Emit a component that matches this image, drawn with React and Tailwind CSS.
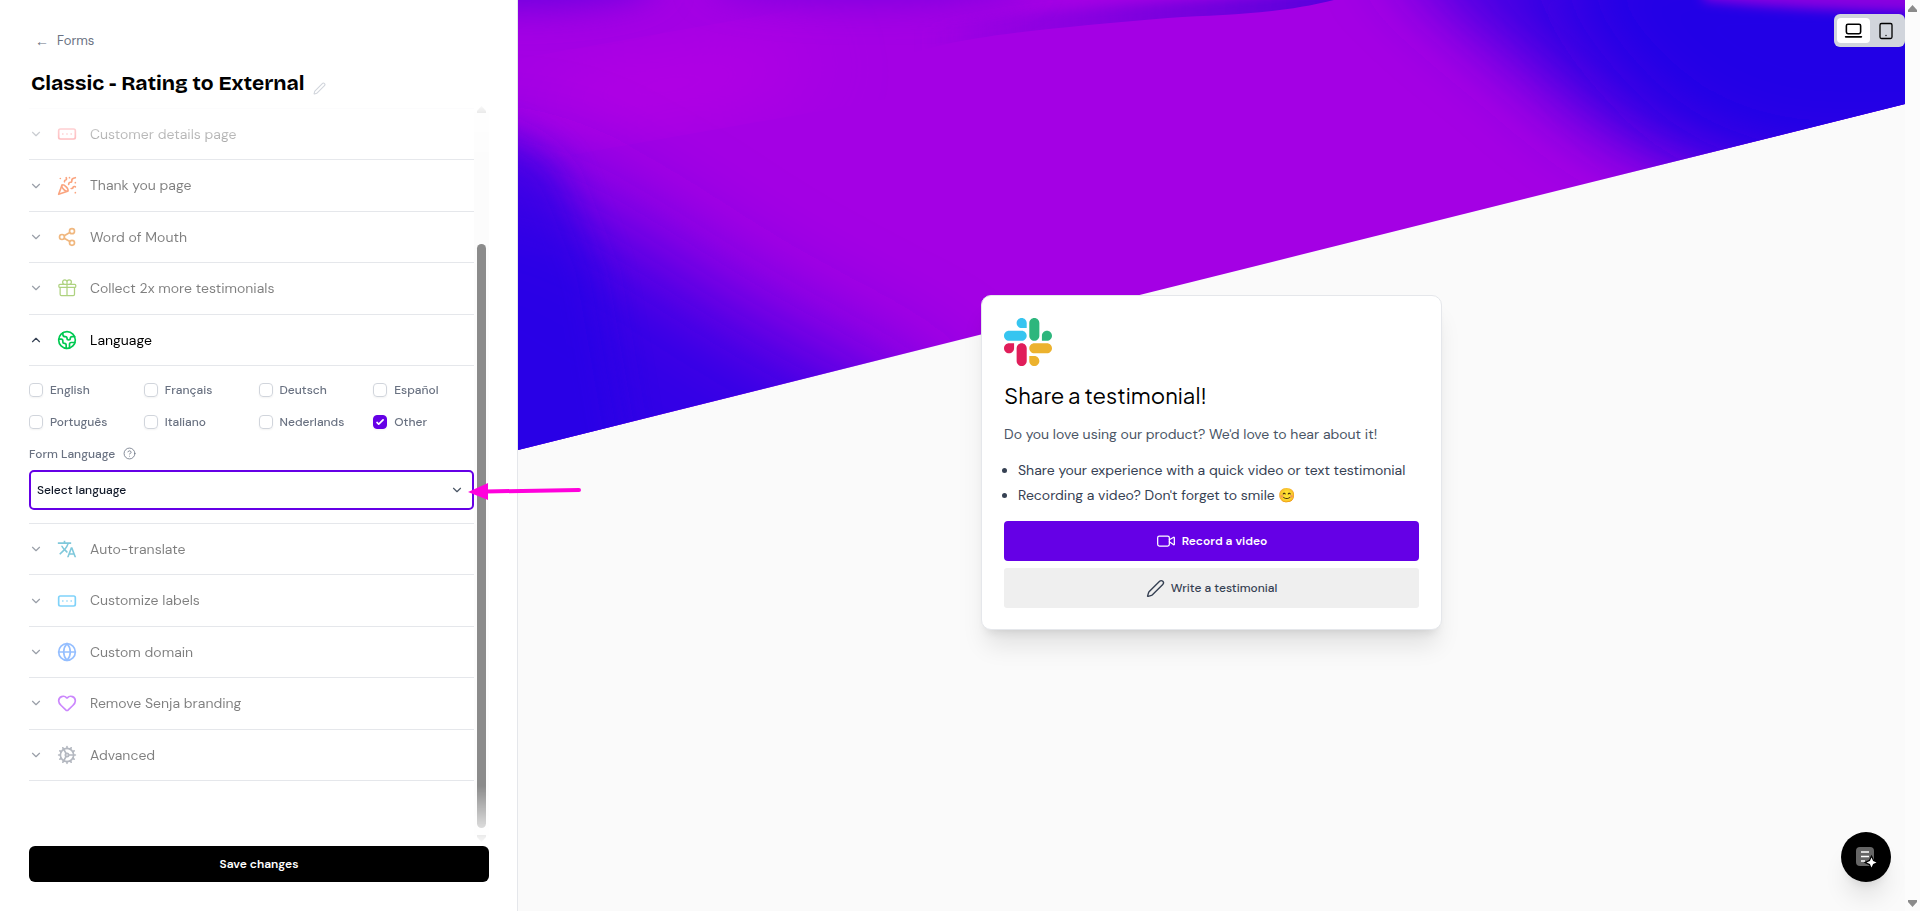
import React, { useState } from "react";
import {
  ChevronDown,
  ChevronUp,
  CircleQuestionMark,
  Cog,
  Earth,
  Globe,
  Heart,
  LaptopMinimal,
  PartyPopper,
  Pen,
  RectangleEllipsis,
  Share2,
  Tablet,
  Video,
} from "lucide-react";
import { HiOutlineGift } from "react-icons/hi2";
import { MdTranslate } from "react-icons/md";

const topSections = [
  { name: "Customer details page", icon: RectangleEllipsis, color: "text-red-500" },
  { name: "Thank you page", icon: PartyPopper, color: "text-orange-600" },
  { name: "Word of Mouth", icon: Share2, color: "text-amber-600" },
  { name: "Collect 2x more testimonials", icon: HiOutlineGift, color: "text-lime-600" },
  { name: "Language", icon: Earth, color: "text-green-500" },
];

const bottomSections = [
  { name: "Auto-translate", icon: MdTranslate, color: "text-cyan-600" },
  { name: "Customize labels", icon: RectangleEllipsis, color: "text-sky-500" },
  { name: "Custom domain", icon: Globe, color: "text-blue-500" },
  { name: "Remove Senja branding", icon: Heart, color: "text-purple-600" },
  { name: "Advanced", icon: Cog, color: "text-gray-500" },
];

const languages = [
  "English",
  "Français",
  "Deutsch",
  "Español",
  "Português",
  "Italiano",
  "Nederlands",
  "Other",
];

const SectionRow = ({ section, open, onClick }) => {
  const Icon = section.icon;
  return (
    <button
      type="button"
      aria-expanded={open}
      onClick={onClick}
      className="flex w-full items-center border-b border-gray-200 py-[14px] text-left text-sm leading-[1.6]"
    >
      <span className={`flex flex-1 items-center ${open ? "text-black" : "opacity-50"}`}>
        {open ? (
          <ChevronUp size={14} className="text-gray-700" />
        ) : (
          <ChevronDown size={14} className="text-gray-700" />
        )}
        <Icon size={20} className={`mr-[13px] ml-[14px] ${section.color}`} />
        {section.name}
      </span>
    </button>
  );
};

const LanguageSettings = () => {
  const [selected, setSelected] = useState("Other");

  return (
    <div className="border-b border-gray-200 pt-[14px] pb-[13px] text-[12px] text-gray-500">
      <div className="grid grid-cols-4 gap-x-[14px] gap-y-3">
        {languages.map((lang) => (
          <label key={lang} className="flex h-5 items-center gap-[7px] font-medium">
            <span className="relative flex size-[14px] shrink-0">
              <input
                type="checkbox"
                checked={selected === lang}
                onChange={() => setSelected(lang)}
                className="size-[14px] appearance-none rounded border border-gray-300 shadow-xs checked:border-[#6500e6] checked:bg-[#6500e6]"
              />
              {selected === lang && (
                <svg viewBox="0 0 16 16" className="pointer-events-none absolute inset-0 fill-white">
                  <path d="M12.2 4.8a1 1 0 0 1 0 1.4l-5 5a1 1 0 0 1-1.4 0l-2-2a1 1 0 0 1 1.4-1.4l1.3 1.3 4.3-4.3a1 1 0 0 1 1.4 0z" />
                </svg>
              )}
            </span>
            {lang}
          </label>
        ))}
      </div>
      <div className="mt-3 flex h-5 items-center gap-2">
        <label htmlFor="form-language" className="font-medium">
          Form Language
        </label>
        <CircleQuestionMark size={13} strokeWidth={1.5} className="text-gray-500" />
      </div>
      <div className="relative mt-[6px]">
        <select
          id="form-language"
          className="h-10 w-full appearance-none rounded-[5px] border-2 border-[#6500e6] bg-white px-[6px] text-[12px] font-medium text-gray-900 outline-none"
        >
          <option>Select language</option>
        </select>
        <ChevronDown
          size={14}
          className="pointer-events-none absolute top-[13px] right-[10px] text-gray-600"
        />
      </div>
    </div>
  );
};

const Sidebar = () => {
  const [openItem, setOpenItem] = useState("Language");

  const handleItemClick = (name) => {
    setOpenItem(name === openItem ? "" : name);
  };

  return (
    <aside className="flex w-[518px] shrink-0 flex-col border-r border-gray-200 bg-white pt-[30px] pr-7 pb-[29px] pl-[29px]">
      <a href="#forms" className="flex items-center gap-2 pl-[6px] text-[13px] leading-[22px] text-gray-500">
        <span className="w-[14px] font-['Liberation_Sans',sans-serif] text-sm">←</span>
        Forms
      </a>
      <div className="mt-[18px] flex h-7 items-center pl-[2px]">
        <h1 className="font-['Bricolage_Grotesque','DM_Sans',sans-serif] text-[21px] font-bold text-black">
          Classic - Rating to External
        </h1>
        <button type="button" aria-label="Rename form" className="mt-2 ml-2 text-gray-300">
          <Pen size={13} />
        </button>
      </div>
      <div className="mt-1 flex min-h-0 flex-1 [mask-image:linear-gradient(to_bottom,transparent,black_60px,black_calc(100%-60px),transparent)]">
        <div className="flex-1 overflow-hidden pt-[6px]">
          <div className="border-t border-gray-200">
            {topSections.map((section) => (
              <SectionRow
                key={section.name}
                section={section}
                open={openItem === section.name}
                onClick={() => handleItemClick(section.name)}
              />
            ))}
            {openItem === "Language" && <LanguageSettings />}
            {bottomSections.map((section) => (
              <SectionRow
                key={section.name}
                section={section}
                open={openItem === section.name}
                onClick={() => handleItemClick(section.name)}
              />
            ))}
          </div>
        </div>
        <div className="flex w-[15px] flex-col items-center bg-[#fcfcfc] py-1" aria-hidden="true">
          <svg width="9" height="7" viewBox="0 0 9 7" className="fill-[#8b8b8b]">
            <path d="M4.5 0 9 5v2H0V5z" />
          </svg>
          <div className="mt-[131px] mb-[7px] w-[9px] flex-1 rounded-full bg-[#8b8b8b]" />
          <svg width="9" height="7" viewBox="0 0 9 7" className="fill-[#8b8b8b]">
            <path d="M4.5 7 9 2V0H0v2z" />
          </svg>
        </div>
      </div>
      <button
        type="button"
        className="h-9 w-full rounded-md bg-black text-[12px] font-semibold text-white"
      >
        Save changes
      </button>
    </aside>
  );
};

const SlackLogo = () => (
  <svg width="48" height="48" viewBox="0 0 122.8 122.8" role="img" aria-label="Slack">
    <path
      fill="#e01e5a"
      d="M25.8 77.6c0 7.1-5.8 12.9-12.9 12.9S0 84.7 0 77.6s5.8-12.9 12.9-12.9h12.9v12.9zM32.3 77.6c0-7.1 5.8-12.9 12.9-12.9s12.9 5.8 12.9 12.9v32.3c0 7.1-5.8 12.9-12.9 12.9s-12.9-5.8-12.9-12.9V77.6z"
    />
    <path
      fill="#36c5f0"
      d="M45.2 25.8c-7.1 0-12.9-5.8-12.9-12.9S38.1 0 45.2 0s12.9 5.8 12.9 12.9v12.9H45.2zM45.2 32.3c7.1 0 12.9 5.8 12.9 12.9s-5.8 12.9-12.9 12.9H12.9C5.8 58.1 0 52.3 0 45.2s5.8-12.9 12.9-12.9h32.3z"
    />
    <path
      fill="#2eb67d"
      d="M97 45.2c0-7.1 5.8-12.9 12.9-12.9s12.9 5.8 12.9 12.9-5.8 12.9-12.9 12.9H97V45.2zM90.5 45.2c0 7.1-5.8 12.9-12.9 12.9s-12.9-5.8-12.9-12.9V12.9C64.7 5.8 70.5 0 77.6 0s12.9 5.8 12.9 12.9v32.3z"
    />
    <path
      fill="#ecb22e"
      d="M77.6 97c7.1 0 12.9 5.8 12.9 12.9s-5.8 12.9-12.9 12.9-12.9-5.8-12.9-12.9V97h12.9zM77.6 90.5c-7.1 0-12.9-5.8-12.9-12.9s5.8-12.9 12.9-12.9h32.3c7.1 0 12.9 5.8 12.9 12.9s-5.8 12.9-12.9 12.9H77.6z"
    />
  </svg>
);

// slanted purple/blue gradient behind the card
const Backdrop = () => (
  <svg
    viewBox="0 0 1387 450"
    preserveAspectRatio="none"
    className="absolute inset-x-0 top-0 h-[450px] w-full"
    aria-hidden="true"
  >
    <defs>
      <clipPath id="slant">
        <path d="M0 0H1387V104L0 450z" />
      </clipPath>
      <clipPath id="fold">
        <path d="M0 0H816C760 14 715 14 650 18C560 26 480 32 420 46L0 160z" />
      </clipPath>
      <linearGradient id="streak" x1="0" x2="1" y1="0" y2="0">
        <stop offset="0" stopColor="#6a00dc" stopOpacity="0" />
        <stop offset="0.6" stopColor="#6a00dc" stopOpacity="0.8" />
        <stop offset="1" stopColor="#4a00dc" />
      </linearGradient>
      <filter id="blur6" x="-50%" y="-100%" width="200%" height="300%">
        <feGaussianBlur stdDeviation="6" />
      </filter>
      <filter id="blur18" x="-50%" y="-100%" width="200%" height="300%">
        <feGaussianBlur stdDeviation="18" />
      </filter>
      <filter id="blur35" x="-50%" y="-50%" width="200%" height="200%">
        <feGaussianBlur stdDeviation="35" />
      </filter>
      <filter id="blur55" x="-50%" y="-50%" width="200%" height="200%">
        <feGaussianBlur stdDeviation="55" />
      </filter>
    </defs>
    <g clipPath="url(#slant)">
      <rect width="1387" height="450" fill="#a400e4" />
      <ellipse cx="150" cy="85" rx="150" ry="26" fill="#b800e4" filter="url(#blur35)" transform="rotate(-10 150 85)" />
      <path d="M-200 190L10 180L120 240L210 300L300 350L400 400L500 620H-200z" fill="#3000e6" filter="url(#blur55)" />
      <path d="M-120 128C-40 122 0 132 40 170L80 270L130 560H-120z" fill="#2800e6" filter="url(#blur18)" opacity="0.65" />
      <path d="M865 -60C925 10 975 40 1025 85C1075 130 1130 165 1225 185L1480 200V-60z" fill="#3a00e4" filter="url(#blur35)" />
      <path d="M1040 -60C1060 30 1110 70 1150 110C1190 138 1230 150 1270 160L1480 160V-60z" fill="#2200e6" filter="url(#blur35)" />
      <g clipPath="url(#fold)">
        <path d="M400 30C500 8 660 2 860 -14V6C760 24 660 26 560 36L400 56z" fill="url(#streak)" filter="url(#blur6)" />
        <ellipse cx="-10" cy="-20" rx="150" ry="28" fill="#6a00e0" filter="url(#blur18)" />
        <ellipse cx="350" cy="-20" rx="160" ry="22" fill="#7a00e0" filter="url(#blur18)" />
      </g>
      <path d="M1185 0C1250 8 1320 10 1400 13V-30H1185z" fill="#8a00e0" filter="url(#blur6)" />
    </g>
  </svg>
);

const TestimonialCard = () => (
  <div className="relative mt-[14px] w-[461px] rounded-[10px] border border-gray-200 bg-white p-[22px] pb-[21px] shadow-xl">
    <SlackLogo />
    <h2 className="mt-[14px] font-['Plus_Jakarta_Sans','DM_Sans',sans-serif] text-[22px] leading-[30px] text-black">
      Share a testimonial!
    </h2>
    <p className="mt-[12px] text-[14px] leading-[25px] text-gray-600">
      Do you love using our product? We'd love to hear about it!
    </p>
    <ul className="mt-[11px] list-disc pl-[14px] text-[14px] leading-[25px] whitespace-nowrap text-gray-700">
      <li>Share your experience with a quick video or text testimonial</li>
      <li>Recording a video? Don't forget to smile 😊</li>
    </ul>
    <button
      type="button"
      className="mt-[13px] flex h-10 w-full items-center justify-center gap-[6px] rounded bg-[#6500e6] text-[12px] font-semibold text-white"
    >
      <Video size={20} strokeWidth={1.5} />
      Record a video
    </button>
    <button
      type="button"
      className="mt-[7px] flex h-10 w-full items-center justify-center gap-[6px] rounded-[3px] bg-[#efefef] text-[12px] font-medium text-gray-700"
    >
      <Pen size={19} strokeWidth={1.75} />
      Write a testimonial
    </button>
  </div>
);

const Preview = () => {
  const [device, setDevice] = useState("desktop");

  return (
    <main className="relative flex flex-1 items-center justify-center overflow-hidden bg-[#fafafa]">
      <Backdrop />
      <TestimonialCard />
      <div className="absolute top-[14px] right-0 flex h-[33px] items-center rounded-md bg-gray-300 pl-[3px]">
        <button
          type="button"
          aria-label="Desktop preview"
          onClick={() => setDevice("desktop")}
          className={`flex h-[25px] w-[33px] items-center justify-center rounded ${device === "desktop" ? "bg-white" : ""}`}
        >
          <LaptopMinimal size={19} className="text-black" />
        </button>
        <button
          type="button"
          aria-label="Mobile preview"
          onClick={() => setDevice("mobile")}
          className={`mr-[3px] flex h-[25px] w-8 items-center justify-center rounded ${device === "mobile" ? "bg-white" : ""}`}
        >
          <Tablet size={18} strokeWidth={1.75} className="text-black" />
        </button>
      </div>
      <button
        type="button"
        aria-label="Open help"
        className="absolute right-[14px] bottom-[29px] flex size-[50px] items-center justify-center rounded-full bg-black shadow-xl"
      >
        <svg width="20" height="20" viewBox="0 0 20 20" className="overflow-visible">
          <rect x="0" y="0" width="18" height="19" rx="4" fill="#666" />
          <path d="M5 5h8M5 9.5h8M5 14h4" stroke="#fff" strokeWidth="1.3" />
          <path
            d="M15.5 10.5l1.6 3.4 3.4 1.6-3.4 1.6-1.6 3.4-1.6-3.4-3.4-1.6 3.4-1.6z"
            fill="#fff"
            stroke="#000"
            strokeWidth="2.4"
            paintOrder="stroke"
          />
        </svg>
      </button>
    </main>
  );
};

const App = () => {
  return (
    <div className="relative flex h-screen min-h-[700px] bg-white font-['DM_Sans','Inter',sans-serif]">
      <Sidebar />
      <Preview />
      <div
        className="flex w-[15px] shrink-0 flex-col items-center justify-between bg-[#fcfcfc] pt-[5px] pb-1"
        aria-hidden="true"
      >
        <svg width="9" height="7" viewBox="0 0 9 7" className="fill-[#8b8b8b]">
          <path d="M4.5 0 9 5v2H0V5z" />
        </svg>
        <svg width="9" height="7" viewBox="0 0 9 7" className="fill-[#8b8b8b]">
          <path d="M4.5 7 9 2V0H0v2z" />
        </svg>
      </div>
      {/* pointer to the language select */}
      <svg
        width="114"
        height="20"
        viewBox="0 0 114 20"
        className="pointer-events-none absolute top-[482px] left-[468px]"
        aria-hidden="true"
      >
        <path d="M18 9.5L111 8" stroke="#ff00dc" strokeWidth="4" strokeLinecap="round" />
        <path d="M0 10L20 1V18z" fill="#ff00dc" />
      </svg>
    </div>
  );
};

export default App;
